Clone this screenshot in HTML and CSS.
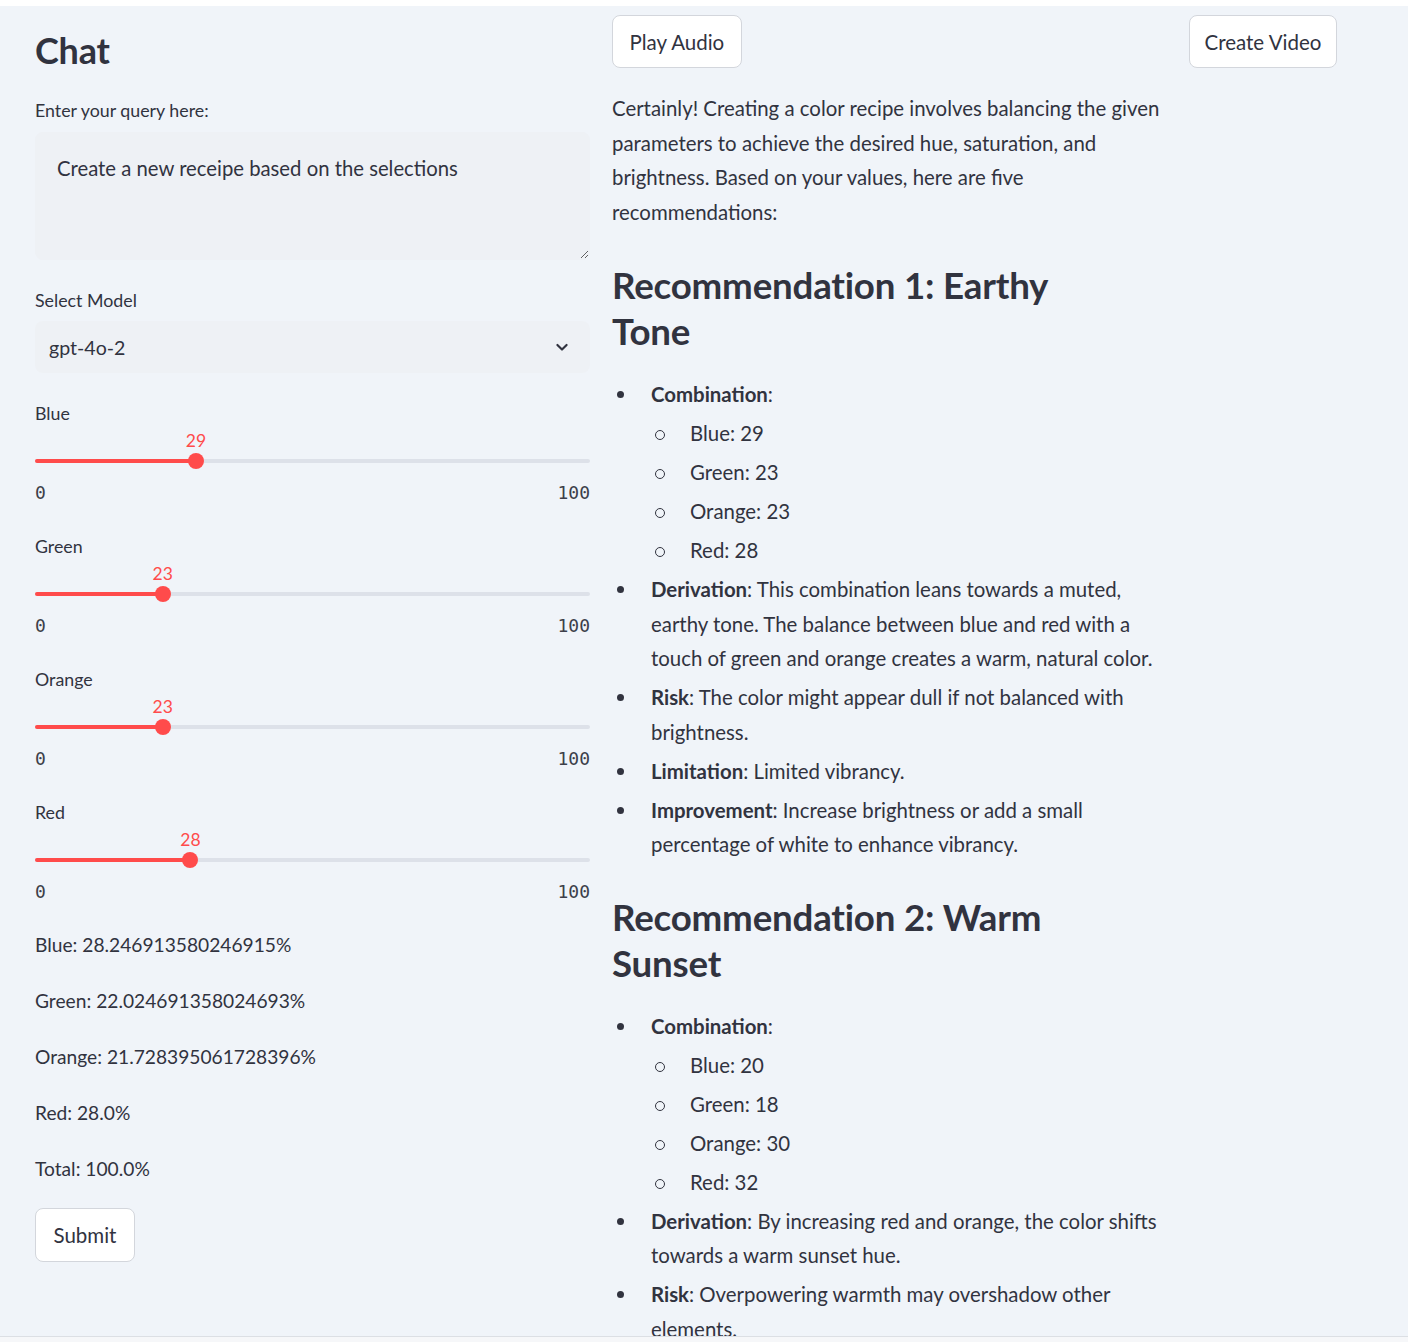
FILE: index.html
```html
<!DOCTYPE html>
<html lang="en">
<head>
<meta charset="utf-8">
<title>Chat</title>
<link rel="stylesheet" href="styles.css">
</head>
<body>
<div class="topbar"></div>
<main class="main">
  <section class="col col-left">
    <h1 class="title">Chat</h1>
    <label class="label label-query" for="q">Enter your query here:</label>
    <textarea id="q" class="textarea">Create a new receipe based on the selections</textarea>

    <div class="label">Select Model</div>
    <div class="select">
      <span class="select-value">gpt-4o-2</span>
      <svg class="chevron" width="20" height="20" viewBox="0 0 24 24"><path d="M6.5 9.5l5.5 5.5 5.5-5.5" fill="none" stroke="#31333f" stroke-width="2.6" stroke-linecap="round" stroke-linejoin="round"/></svg>
    </div>

    <div class="slider-block">
      <div class="label">Blue</div>
      <div class="slider">
        <div class="track"><div class="fill" style="width:29%"></div></div>
        <div class="thumb" style="left:29%"><span class="thumb-value">29</span></div>
      </div>
      <div class="ticks"><span>0</span><span>100</span></div>
    </div>

    <div class="slider-block">
      <div class="label">Green</div>
      <div class="slider">
        <div class="track"><div class="fill" style="width:23%"></div></div>
        <div class="thumb" style="left:23%"><span class="thumb-value">23</span></div>
      </div>
      <div class="ticks"><span>0</span><span>100</span></div>
    </div>

    <div class="slider-block">
      <div class="label">Orange</div>
      <div class="slider">
        <div class="track"><div class="fill" style="width:23%"></div></div>
        <div class="thumb" style="left:23%"><span class="thumb-value">23</span></div>
      </div>
      <div class="ticks"><span>0</span><span>100</span></div>
    </div>

    <div class="slider-block">
      <div class="label">Red</div>
      <div class="slider">
        <div class="track"><div class="fill" style="width:28%"></div></div>
        <div class="thumb" style="left:28%"><span class="thumb-value">28</span></div>
      </div>
      <div class="ticks"><span>0</span><span>100</span></div>
    </div>

    <div class="stats">
      <p>Blue: 28.246913580246915%</p>
      <p>Green: 22.024691358024693%</p>
      <p>Orange: 21.728395061728396%</p>
      <p>Red: 28.0%</p>
      <p>Total: 100.0%</p>
    </div>
    <button class="btn btn-submit">Submit</button>
  </section>

  <section class="col col-mid">
    <div class="btn-row"><button class="btn">Play Audio</button></div>
    <div class="md">
      <p>Certainly! Creating a color recipe involves balancing the given parameters to achieve the desired hue, saturation, and brightness. Based on your values, here are five recommendations:</p>
      <h2>Recommendation 1: Earthy Tone</h2>
      <ul>
        <li><strong>Combination</strong>:
          <ul>
            <li>Blue: 29</li>
            <li>Green: 23</li>
            <li>Orange: 23</li>
            <li>Red: 28</li>
          </ul>
        </li>
        <li><strong>Derivation</strong>: This combination leans towards a muted, earthy tone. The balance between blue and red with a touch of green and orange creates a warm, natural color.</li>
        <li><strong>Risk</strong>: The color might appear dull if not balanced with brightness.</li>
        <li><strong>Limitation</strong>: Limited vibrancy.</li>
        <li><strong>Improvement</strong>: Increase brightness or add a small percentage of white to enhance vibrancy.</li>
      </ul>
      <h2>Recommendation 2: Warm Sunset</h2>
      <ul>
        <li><strong>Combination</strong>:
          <ul>
            <li>Blue: 20</li>
            <li>Green: 18</li>
            <li>Orange: 30</li>
            <li>Red: 32</li>
          </ul>
        </li>
        <li><strong>Derivation</strong>: By increasing red and orange, the color shifts towards a warm sunset hue.</li>
        <li><strong>Risk</strong>: Overpowering warmth may overshadow other elements.</li>
      </ul>
    </div>
  </section>

  <section class="col col-right">
    <div class="btn-row"><button class="btn btn-video">Create Video</button></div>
  </section>
</main>
<div class="footer"></div>
</body>
</html>
```
FILE: styles.css
```css
* { box-sizing: border-box; }

html, body {
  margin: 0;
  padding: 0;
  background: #f0f4f9;
  color: #31333f;
  font-family: Lato, "Noto Sans", sans-serif;
  font-size: 20.4px;
}

.topbar {
  height: 6px;
  background: #ffffff;
}

.main {
  display: grid;
  grid-template-columns: 555px 555px 1fr;
  column-gap: 22px;
  padding: 0 35px;
  height: 1330px;
  overflow: hidden;
}

.footer {
  height: 6px;
  border-top: 1px solid #dcdfe4;
  background: #f6f7f9;
}

.col-left { padding-top: 16px; }
.col-mid, .col-right { padding-top: 9px; }

.title {
  margin: 0 0 21px;
  font-size: 36px;
  line-height: 56px;
  font-weight: 700;
  letter-spacing: -0.2px;
}

.label {
  display: block;
  font-size: 17.8px;
  line-height: 22px;
  margin-bottom: 10px;
}

.label-query { margin-bottom: 11px; }

.textarea {
  display: block;
  width: 100%;
  height: 128px;
  margin: 0 0 29px;
  padding: 19px 21px;
  border: 1px solid #eef1f5;
  border-radius: 8px;
  background: #eef1f5;
  color: #31333f;
  font-family: inherit;
  font-size: 20.3px;
  line-height: 32px;
  resize: vertical;
  outline: none;
}

.select {
  display: flex;
  align-items: center;
  justify-content: space-between;
  height: 52px;
  padding: 0 18px 0 14px;
  border-radius: 8px;
  background: #eef1f5;
  margin-bottom: 29px;
}

.select-value { font-size: 19.6px; }

.chevron { display: block; }

.slider-block { margin-bottom: 31px; }
.slider-block .label { margin-bottom: 0; }

.slider {
  position: relative;
  height: 56px;
}

.track {
  position: absolute;
  left: 0;
  right: 0;
  top: 35px;
  height: 4px;
  border-radius: 2px;
  background: #dde1e9;
}

.fill {
  height: 100%;
  border-radius: 2px;
  background: #ff4b4b;
}

.thumb {
  position: absolute;
  top: 29px;
  width: 16px;
  height: 16px;
  margin-left: -8px;
  border-radius: 50%;
  background: #ff4b4b;
}

.thumb-value {
  position: absolute;
  left: 50%;
  bottom: 18px;
  transform: translateX(-50%);
  color: #ff4b4b;
  font-size: 17.5px;
  line-height: 20px;
  white-space: nowrap;
}

.ticks {
  display: flex;
  justify-content: space-between;
  font-family: "DejaVu Sans Mono", "Liberation Mono", monospace;
  font-size: 18px;
  line-height: 24px;
  color: #3d3f4a;
  margin-top: 1px;
}

.slider-block .ticks { margin-bottom: -1px; }

.stats { margin-top: -6px; }
.stats p {
  margin: 0 0 24px;
  font-size: 19.2px;
  line-height: 32px;
}

.btn {
  display: inline-block;
  height: 54px;
  padding: 0 16.5px;
  border: 1px solid #d3d6dc;
  border-radius: 8px;
  background: #ffffff;
  color: #31333f;
  font-family: inherit;
  font-size: 20.5px;
  cursor: pointer;
}

.btn-submit { margin-top: -1px; padding: 0 17.5px; }

.col-mid .btn, .col-right .btn { height: 53px; }

.btn-video { padding: 0 14.5px; }

.md { margin-top: 23px; }

.md p {
  margin: 0 0 33px;
  line-height: 34.5px;
}

.md h2 {
  margin: 0 0 23px;
  padding-right: 45px;
  font-size: 36.7px;
  line-height: 46px;
  font-weight: 700;
  letter-spacing: -0.2px;
}

.md ul {
  margin: 0 0 32px;
  padding-left: 39px;
  list-style: none;
}

.md ul ul {
  margin: 0;
  padding-left: 39px;
}

.md li {
  position: relative;
  line-height: 34.5px;
  margin-top: 4.5px;
}

.md li::before {
  content: "";
  position: absolute;
  left: -34px;
  top: 14px;
  width: 7px;
  height: 7px;
  border-radius: 50%;
  background: #31333f;
}

.md ul ul li::before {
  left: -35px;
  width: 8px;
  height: 8px;
  background: transparent;
  border: 1.2px solid #31333f;
}

.md ul > li:first-child { margin-top: 0; }
.md ul ul > li:first-child { margin-top: 4.5px; }

.md strong { font-weight: 700; }
```
